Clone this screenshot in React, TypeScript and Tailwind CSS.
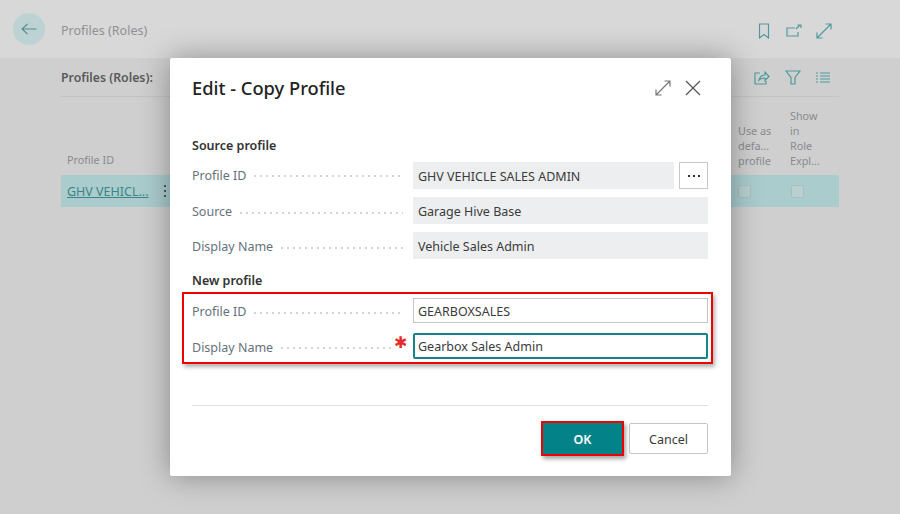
import React from 'react';

const font = { fontFamily: '"Noto Sans", "Open Sans", sans-serif' };

const Dots = ({ short }: { short?: boolean }) => (
  <span className={`flex-1 ml-[8px] h-[2px] bg-[repeating-linear-gradient(90deg,#d4d4d4_0,#d4d4d4_2px,transparent_2px,transparent_6px)] ${short ? 'mr-[22px]' : 'mr-[10px]'}`} />
);

const ReadRow = ({ label, value, more, drop }: { label: string; value: string; more?: boolean; drop?: boolean }) => (
  <div className="flex items-center h-[27px]">
    <span className={`w-[221px] shrink-0 flex items-center text-[12.5px] text-[#66717b] ${drop ? 'pt-[4px]' : 'pt-[1px]'}`}>
      <span>{label}</span>
      <Dots />
    </span>
    <div className="flex-1 h-[27px] bg-[#edeef0] pl-[5px] pt-[3px] flex items-center text-[12.5px] text-[#3b3b3b]">{value}</div>
    {more && (
      <button className="ml-[5px] w-[29px] h-[27px] border border-[#c8c8c8] flex items-center justify-center gap-[3px]">
        <span className="w-[2px] h-[2px] bg-[#333333]" />
        <span className="w-[2px] h-[2px] bg-[#333333]" />
        <span className="w-[2px] h-[2px] bg-[#333333]" />
      </button>
    )}
  </div>
);

const ExpandIcon = ({ color }: { color: string }) => (
  <svg width="16" height="16" viewBox="0 0 16 16" fill="none" stroke={color} strokeWidth="1.2">
    <path d="M1 15 15 1M9.500 1H15v5.500M1 9.500V15h5.500" />
  </svg>
);

export default function App() {
  return (
    <div className="relative w-[900px] h-[514px] overflow-hidden bg-[#cfcfcf]" style={font}>
      <header className="h-[58px] bg-[#d8d8d8] flex items-center pl-[13px] pr-[68px]">
        <div className="w-[32px] h-[32px] rounded-full bg-[#bcd2d3] flex items-center justify-center">
          <svg width="16" height="14" viewBox="0 0 16 14" fill="none" stroke="#5b8a8c" strokeWidth="1.1">
            <path d="M15.500 7H1M6.500 2 1 7l5.500 5" />
          </svg>
        </div>
        <span className="ml-[16px] mt-[5px] text-[12.5px] text-[#8d9296]">Profiles (Roles)</span>
        <div className="ml-auto flex items-center mt-[3px]">
          <svg width="12" height="16" viewBox="0 0 12 16" fill="none" stroke="#4f9a9c" strokeWidth="1.2">
            <path d="M1.500 1h9v14L6 11.500 1.500 15z" />
          </svg>
          <svg className="ml-[16px]" width="16" height="14" viewBox="0 0 16 14" fill="none" stroke="#4f9a9c" strokeWidth="1.2">
            <path d="M9 4H1v8h11V8M10 5l4-4M11.500 1H15v3" />
          </svg>
          <span className="ml-[14px]"><ExpandIcon color="#4f9a9c" /></span>
        </div>
      </header>

      <main className="px-[61px]">
        <div className="h-[39px] flex items-center justify-between border-b border-[#c3c3c3] pr-[9px]">
          <span className="text-[12.3px] font-semibold text-[#5a5a5a] mt-[3px]">Profiles (Roles):</span>
          <div className="flex items-center gap-[15px]">
            <svg width="16" height="15" viewBox="0 0 16 15" fill="none" stroke="#4f9a9c" strokeWidth="1.2">
              <path d="M6 3H1v11h11v-3M5 10c1-4 4-5 6-5V2l4 4.500-4 4V8c-2 0-4 0-6 2z" />
            </svg>
            <svg width="16" height="15" viewBox="0 0 16 15" fill="none" stroke="#4f9a9c" strokeWidth="1.2">
              <path d="M1 1h14L10 7.500V14H6V7.500z" />
            </svg>
            <svg width="14" height="11" viewBox="0 0 14 11" fill="none" stroke="#4f9a9c" strokeWidth="1.1">
              <path d="M0 1h2M4 1h10M0 4h2M4 4h10M0 7h2M4 7h10M0 10h2M4 10h10" />
            </svg>
          </div>
        </div>

        <div className="h-[78px] flex items-end text-[10.8px] leading-[15px] text-[#878c90]">
          <span className="ml-[6px] pb-[8px]">Profile ID</span>
          <span className="ml-auto w-[52px] pb-[7px]">Use as<br />defa...<br />profile</span>
          <span className="w-[49px] pb-[7px]">Show<br />in<br />Role<br />Expl...</span>
        </div>

        <div className="h-[32px] bg-[#aacccd] flex items-center">
          <span className="ml-[6px] pt-[3px] text-[12.5px] text-[#3d8487] underline">GHV VEHICL...</span>
          <span className="ml-[15px] flex flex-col gap-[3px]">
            <span className="w-[2px] h-[2px] bg-[#555555]" />
            <span className="w-[2px] h-[2px] bg-[#555555]" />
            <span className="w-[2px] h-[2px] bg-[#555555]" />
          </span>
          <span className="ml-auto w-[13px] h-[13px] rounded-[2px] border border-[#a9bfbf] bg-[#bad0d0]" />
          <span className="ml-[40px] mr-[35px] w-[13px] h-[13px] rounded-[2px] border border-[#a9bfbf] bg-[#bad0d0]" />
        </div>
      </main>

      <div className="absolute left-[170px] top-[58px] w-[561px] h-[418px] bg-white rounded-[2px] pl-[22px] pr-[23px] shadow-[0_0_30px_rgba(0,0,0,0.35)]">
        <div className="h-[60px] flex items-center justify-between pr-[7px]">
          <h1 className="text-[18.3px] font-medium text-[#222222]">Edit - Copy Profile</h1>
          <div className="flex items-center gap-[14px]">
            <ExpandIcon color="#777777" />
            <svg width="16" height="16" viewBox="0 0 16 16" fill="none" stroke="#555555" strokeWidth="1.3">
              <path d="M1 1l14 14M15 1 1 15" />
            </svg>
          </div>
        </div>

        <h2 className="mt-[17px] h-[20px] leading-[22px] text-[12.5px] font-semibold text-[#333333]">Source profile</h2>
        <div className="mt-[7px] flex flex-col gap-[8px]">
          <ReadRow label="Profile ID" value="GHV VEHICLE SALES ADMIN" more />
          <ReadRow label="Source" value="Garage Hive Base" drop />
          <ReadRow label="Display Name" value="Vehicle Sales Admin" drop />
        </div>

        <h2 className="mt-[11px] h-[20px] leading-[22px] text-[12.5px] font-semibold text-[#333333]">New profile</h2>

        <div className="-ml-[10px] -mr-[5px] mt-[2px] h-[72px] border-2 border-[#ee0000] pl-[8px] pr-[3px] pt-[4px] shadow-[2px_3px_4px_rgba(0,0,0,0.3)]">
          <div className="flex items-center h-[25px]">
            <span className="w-[221px] shrink-0 flex items-center pt-[4px] text-[12.5px] text-[#66717b]">
              <span>Profile ID</span>
              <Dots />
            </span>
            <div className="flex-1 h-[25px] border border-[#c4c4c4] pl-[4px] pt-[3px] flex items-center text-[12.5px] text-[#3b3b3b]">GEARBOXSALES</div>
          </div>
          <div className="mt-[10px] flex items-center h-[26px]">
            <span className="w-[221px] shrink-0 flex items-center pt-[4px] text-[12.5px] text-[#66717b] relative">
              <span>Display Name</span>
              <Dots short />
              <span className="absolute left-[202px] top-[-2px] text-[16px] leading-[20px] text-[#e52b2b]" style={{ fontFamily: '"DejaVu Sans", sans-serif' }}>✱</span>
            </span>
            <div className="flex-1 h-[26px] border-2 border-[#14868a] rounded-[2px] pl-[3px] pt-[3px] flex items-center text-[12.5px] text-[#3b3b3b]">Gearbox Sales Admin</div>
          </div>
        </div>

        <div className="mt-[41px] border-t border-[#e0e0e0]" />

        <div className="mt-[15px] flex justify-end items-center">
          <button className="w-[83px] h-[35px] border-2 border-[#ee0000] bg-[#038387] pt-[3px] text-white text-[12.5px] font-semibold shadow-[2px_3px_4px_rgba(0,0,0,0.35)]">OK</button>
          <button className="ml-[5px] w-[79px] h-[31px] border border-[#c4c4c4] rounded-[2px] pt-[3px] text-[12.5px] text-[#3b3b3b]">Cancel</button>
        </div>
      </div>
    </div>
  );
}
